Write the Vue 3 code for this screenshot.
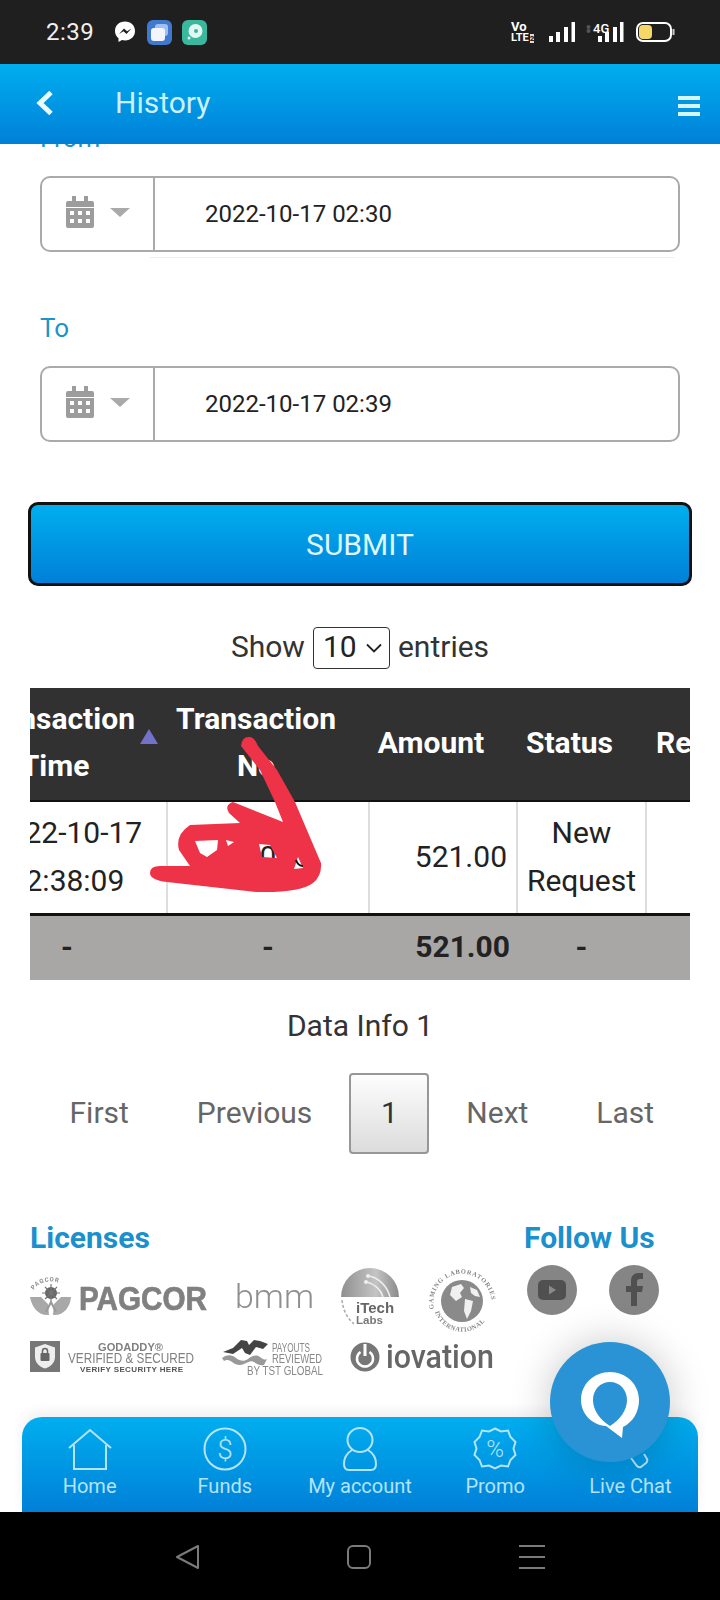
<script setup>
const navItems = ['Home', 'Funds', 'My account', 'Promo', 'Live Chat']
const dates = [
  { label: 'From', value: '2022-10-17 02:30', first: true },
  { label: 'To', value: '2022-10-17 02:39', first: false },
]
</script>

<template>
  <div class="page">
    <div class="statusbar">
      <div class="st-left">
        <span class="time">2:39</span>
        <svg class="st-msg" width="22" height="24" viewBox="0 0 22 24"><path d="M11 1.500C5 1.500 1 5.600 1 11c0 3 1.300 5.500 3.500 7.200V22l3.500-2c1 .3 2 .4 3 .4 6 0 10-4 10-9.400S17 1.500 11 1.500z" fill="#fff"/><path d="M5 14l5-5.500 3 2.700 4.500-2.700-5 5.500-3-2.700z" fill="#1f1f1f"/></svg>
        <svg class="st-app" width="25" height="25" viewBox="0 0 25 25"><rect width="25" height="25" rx="6" fill="#4079d0"/><rect x="8" y="4" width="13" height="12" rx="3" fill="#9fc0f0"/><rect x="4" y="8" width="14" height="13" rx="3" fill="#f2f6fc"/></svg>
        <svg class="st-app" width="25" height="25" viewBox="0 0 25 25"><rect width="25" height="25" rx="6" fill="#39b89d"/><circle cx="13.500" cy="11" r="7" fill="#e4f6f1"/><circle cx="14" cy="11" r="2" fill="#39b89d"/><circle cx="7" cy="18" r="1.500" fill="#e4f6f1"/></svg>
      </div>
      <div class="st-right">
        <div class="volte"><span class="vo">Vo</span><span class="lte">LTE<b>2</b></span></div>
        <svg width="26" height="20" viewBox="0 0 26 20"><rect x="0" y="14" width="4" height="6" fill="#fff"/><rect x="7" y="10" width="4" height="10" fill="#fff"/><rect x="15" y="5" width="4" height="15" fill="#fff"/><rect x="22.500" y="0" width="3.500" height="20" fill="#fff"/></svg>
        <svg class="sig4g" width="38" height="20" viewBox="0 0 38 20"><circle cx="2.500" cy="5" r="2" fill="#555"/><circle cx="2.500" cy="9" r="2" fill="#555"/><rect x="12" y="14" width="4" height="6" fill="#fff"/><rect x="19" y="10" width="4" height="10" fill="#fff"/><rect x="27" y="5" width="4" height="15" fill="#fff"/><rect x="34" y="0" width="3.500" height="20" fill="#fff"/><text x="7" y="11" font-size="13" font-family="Roboto, sans-serif" fill="#fff" font-weight="500">4G</text></svg>
        <svg width="39" height="20" viewBox="0 0 39 20"><rect x="1" y="1" width="34" height="18" rx="6" fill="none" stroke="#fff" stroke-width="2"/><rect x="3" y="3" width="13" height="14" rx="4" fill="#f5d867"/><rect x="36.500" y="7" width="2" height="6" fill="#ccc"/></svg>
      </div>
    </div>

    <header class="topbar">
      <svg class="back" width="18" height="26" viewBox="0 0 18 26"><path d="M15 2.500L4 13l11 10.500" fill="none" stroke="#eafaff" stroke-width="5"/></svg>
      <span class="title">History</span>
      <div class="burger"><i></i><i></i><i></i></div>
    </header>

    <main class="content">
      <div v-for="d in dates" :key="d.label" class="field" :class="{ 'field-first': d.first }">
        <label class="lbl">{{ d.label }}</label>
        <div class="inp">
          <div class="addon">
            <svg class="cal" width="28" height="32" viewBox="0 0 28 32"><path d="M0 7a2 2 0 0 1 2-2h4V0h4v5h8V0h4v5h4a2 2 0 0 1 2 2v4H0z" fill="#9c9c9c"/><path fill-rule="evenodd" d="M0 12h28v18a2 2 0 0 1-2 2H2a2 2 0 0 1-2-2zM4 15v4h4v-4zm8 0v4h4v-4zm8 0v4h4v-4zM4 23v4h4v-4zm8 0v4h4v-4zm8 0v4h4v-4z" fill="#9c9c9c"/></svg>
            <span class="caret"></span>
          </div>
          <span class="val">{{ d.value }}</span>
        </div>
        <div v-if="d.first" class="ghostline"></div>
      </div>

      <button class="submit">SUBMIT</button>

      <div class="show">
        <span class="showtxt">Show</span>
        <span class="selwrap">
          <select class="sel"><option>10</option></select>
          <svg class="chev" width="16" height="10" viewBox="0 0 16 10"><path d="M1 1.500l7 7 7-7" fill="none" stroke="#222" stroke-width="1.800"/></svg>
        </span>
        <span class="showtxt">entries</span>
      </div>

      <div class="tablewrap">
        <table class="tbl">
          <colgroup>
            <col class="c1"><col class="c2"><col class="c3"><col class="c4"><col class="c5">
          </colgroup>
          <thead>
            <tr>
              <th class="sorted">Transaction<br>Time<span class="sort"></span></th>
              <th>Transaction<br>No</th>
              <th>Amount</th>
              <th>Status</th>
              <th class="rem">Remark</th>
            </tr>
          </thead>
          <tbody>
            <tr>
              <td>2022-10-17<br>02:38:09</td>
              <td class="no">0</td>
              <td class="amt">521.00</td>
              <td>New<br>Request</td>
              <td></td>
            </tr>
          </tbody>
          <tfoot>
            <tr>
              <td>-</td>
              <td>-</td>
              <td class="amt">521.00</td>
              <td>-</td>
              <td></td>
            </tr>
          </tfoot>
        </table>
      </div>

      <div class="info">Data Info 1</div>

      <div class="pager">
        <a>First</a>
        <a>Previous</a>
        <a class="cur">1</a>
        <a>Next</a>
        <a>Last</a>
      </div>

      <div class="foot">
        <div class="lic">
          <h3>Licenses</h3>
          <div class="logorow r1">
            <svg width="177" height="42" viewBox="0 0 177 42">
              <defs><path id="pagArc" d="M4 14A18 13 0 0 1 38 14"/></defs>
              <text font-size="6" font-weight="700" font-family="Roboto, sans-serif" fill="#888" letter-spacing=".8"><textPath href="#pagArc">PAGCOR</textPath></text>
              <circle cx="21" cy="17" r="6" fill="#666"/>
              <path d="M21 8v18M12 17h18M15 11l12 12M27 11L15 23" stroke="#777" stroke-width="1.200"/>
              <path d="M0 21h11l7 7 1 11C9 40 2 32 0 21zM41 21H31l-7 7-1 11c10 1 17-7 18-18z" fill="#a8a8a8"/>
              <path d="M21 26l-5 10M21 26l5 10" stroke="#999" stroke-width="2"/>
              <text x="49" y="34" font-size="33" font-weight="700" font-family="Liberation Sans, sans-serif" fill="#808080" stroke="#808080" stroke-width=".7" textLength="128" lengthAdjust="spacingAndGlyphs">PAGCOR</text>
            </svg>
            <svg width="79" height="42" viewBox="0 0 79 42">
              <text x="0" y="32" font-size="33" font-weight="300" font-family="Roboto, sans-serif" fill="#8f8f8f" textLength="79" lengthAdjust="spacingAndGlyphs">bmm</text>
            </svg>
            <svg class="up" width="59" height="60" viewBox="0 0 59 60">
              <defs><linearGradient id="itg" x1="0" y1="0" x2="1" y2="0"><stop offset="0" stop-color="#8f8f8f"/><stop offset=".6" stop-color="#c4c4c4"/><stop offset="1" stop-color="#8a8a8a"/></linearGradient></defs>
              <path d="M0 29a29 29 0 0 1 58 0z" fill="url(#itg)"/>
              <path d="M28 8c10 2 18 10 21 21M26 14c8 2 14 8 16 15" fill="none" stroke="#eee" stroke-width="1.500"/>
              <circle cx="27" cy="8" r="2" fill="#eee"/><circle cx="25" cy="14" r="2" fill="#eee"/>
              <path d="M1 32c1 10 5 18 12 24" fill="none" stroke="#aaa" stroke-width="1.500" stroke-dasharray="3 2"/>
              <text x="15" y="45" font-size="15" font-weight="700" font-family="Liberation Sans, sans-serif" fill="#666">iTech</text>
              <text x="15" y="56" font-size="11.500" font-weight="700" font-family="Liberation Sans, sans-serif" fill="#777">Labs</text>
            </svg>
            <svg class="up2" width="68" height="68" viewBox="0 0 68 68">
              <defs>
                <path id="gliTop" d="M6 42A29 29 0 1 1 63 40"/>
                <path id="gliBot" d="M7 45A29 29 0 0 0 62 45"/>
              </defs>
              <circle cx="34" cy="34" r="21" fill="#8a8a8a"/>
              <path d="M24 20l9-3 3 4-4 5 2 4-6 4-6-6zM37 32l8 2-2 10-4 8-3-8zM42 20l7 3 3 7-5-1-4-3z" fill="#f0f0f0"/>
              <text font-size="6.500" font-weight="700" font-family="Liberation Serif, serif" fill="#888" letter-spacing=".7"><textPath href="#gliTop">GAMING LABORATORIES</textPath></text>
              <text font-size="6.500" font-weight="700" font-family="Liberation Serif, serif" fill="#888" letter-spacing=".5"><textPath href="#gliBot">INTERNATIONAL</textPath></text>
            </svg>
          </div>
          <div class="logorow r2">
            <svg width="164" height="34" viewBox="0 0 164 34">
              <rect y="1" width="30" height="31" fill="#777"/>
              <path d="M15 4l10 3.500v9c0 6-4 10-10 12-6-2-10-6-10-12v-9z" fill="#eee"/>
              <rect x="10.500" y="13" width="9" height="8" rx="1" fill="#666"/>
              <path d="M12.500 13v-2a2.500 2.500 0 0 1 5 0v2" fill="none" stroke="#666" stroke-width="1.500"/>
              <text x="68" y="11" font-size="11" font-weight="700" font-family="Liberation Sans, sans-serif" fill="#808080" textLength="65" lengthAdjust="spacingAndGlyphs">GODADDY®</text>
              <text x="38" y="23" font-size="14" font-family="Liberation Sans, sans-serif" fill="#808080" textLength="126" lengthAdjust="spacingAndGlyphs">VERIFIED &amp; SECURED</text>
              <text x="50" y="32" font-size="8" font-weight="700" font-family="Liberation Sans, sans-serif" fill="#555" textLength="103" lengthAdjust="spacing">VERIFY SECURITY HERE</text>
            </svg>
            <svg class="tst" width="101" height="38" viewBox="0 0 101 38">
              <path d="M1 14l10-4 8-8 6 1 2 4 5-5 6 1 8 3-5 5-7-2-6 8-5-2-3-5-9 6z" fill="#444"/>
              <path d="M0 20c6-4 10-3 14 0s8 4 12 1 8-5 12-2 5 3 7 2l-3 6c-4 1-7-1-10-3s-6 0-10 2-8 1-12-2-6-2-8-1z" fill="#999"/>
              <text x="50" y="14" font-size="12" font-family="Liberation Sans, sans-serif" fill="#888" textLength="38" lengthAdjust="spacingAndGlyphs">PAYOUTS</text>
              <text x="50" y="25" font-size="12" font-family="Liberation Sans, sans-serif" fill="#888" textLength="50" lengthAdjust="spacingAndGlyphs">REVIEWED</text>
              <text x="25" y="37" font-size="12" font-family="Liberation Sans, sans-serif" fill="#888" textLength="76" lengthAdjust="spacingAndGlyphs">BY TST GLOBAL</text>
            </svg>
            <svg class="iov" width="145" height="30" viewBox="0 0 145 30">
              <circle cx="15" cy="15" r="14.500" fill="#777"/>
              <path d="M10.500 10a8 8 0 1 0 9 0" fill="none" stroke="#fff" stroke-width="2.500"/>
              <rect x="13.500" y="2" width="3" height="12" fill="#fff"/>
              <text x="36" y="26" font-size="33" font-weight="500" font-family="Roboto, sans-serif" fill="#666" textLength="108" lengthAdjust="spacingAndGlyphs">iovation</text>
            </svg>
          </div>
        </div>
        <div class="follow">
          <h3>Follow Us</h3>
          <div class="socials">
            <svg width="50" height="50" viewBox="0 0 50 50"><circle cx="25" cy="25" r="25" fill="#858585"/><rect x="11" y="15" width="28" height="20" rx="5" fill="#505050"/><path d="M22 20.500l7 4.500-7 4.500z" fill="#8a8a8a"/></svg>
            <svg width="50" height="50" viewBox="0 0 50 50"><circle cx="25" cy="25" r="25" fill="#858585"/><path d="M22 41V27h-5v-6h5v-5c0-5 3-8 7.500-8H34v6h-3c-2 0-3 1-3 3v4h6l-1 6h-5v14z" fill="#505050"/></svg>
          </div>
        </div>
      </div>

      <nav class="bottomnav">
        <div v-for="(n, i) in navItems" :key="n" class="navitem">
          <svg v-if="i === 0" width="44" height="42" viewBox="0 0 44 42"><path d="M1 20L22 2l21 18M6 17v24h32V17" fill="none" stroke="#b5e3f8" stroke-width="2"/></svg>
          <svg v-else-if="i === 1" width="44" height="44" viewBox="0 0 44 44"><circle cx="22" cy="22" r="20.500" fill="none" stroke="#b5e3f8" stroke-width="2"/><text x="22" y="32" font-size="28" text-anchor="middle" font-family="Roboto, sans-serif" font-weight="300" fill="#b5e3f8">$</text></svg>
          <svg v-else-if="i === 2" width="34" height="44" viewBox="0 0 34 44"><ellipse cx="17" cy="13" rx="12.500" ry="12" fill="none" stroke="#b5e3f8" stroke-width="2"/><path d="M9 23C4 26 1 31 1 37c0 4 2 6 5 6h22c3 0 5-2 5-6 0-6-3-11-8-14" fill="none" stroke="#b5e3f8" stroke-width="2"/></svg>
          <svg v-else-if="i === 3" width="44" height="44" viewBox="0 0 44 44"><path d="M22 1.500l6 3 7-1 2.500 6.500 5 5-2 6.500 2 6.500-5 5-2.500 6.500-7-1-6 3-6-3-7 1-2.500-6.500-5-5 2-6.500-2-6.500 5-5L9 3.500l7 1z" fill="none" stroke="#b5e3f8" stroke-width="2"/><text x="22" y="30" font-size="24" text-anchor="middle" font-family="Roboto, sans-serif" font-weight="300" fill="#b5e3f8">%</text></svg>
          <svg v-else width="44" height="44" viewBox="0 0 44 44"><path d="M23 31l6 8q2 2 4 1l5-4q2-2 1-4l-3-5" fill="none" stroke="#b5e3f8" stroke-width="2"/></svg>
          <span>{{ n }}</span>
        </div>
      </nav>
    </main>

    <footer class="android">
      <svg width="24" height="24" viewBox="0 0 24 24"><path d="M23 1v22L2 12z" fill="none" stroke="#7a7a7a" stroke-width="2" stroke-linejoin="round"/></svg>
      <svg width="24" height="24" viewBox="0 0 24 24"><rect x="1" y="1" width="22" height="22" rx="5" fill="none" stroke="#7a7a7a" stroke-width="2"/></svg>
      <svg width="26" height="24" viewBox="0 0 26 24"><path d="M0 1h26M0 12h26M0 23h26" stroke="#7a7a7a" stroke-width="2"/></svg>
    </footer>

    <svg class="scribble" width="190" height="170" viewBox="141 730 190 170">
      <path fill-rule="evenodd" fill="#ee3349" d="M241 746Q242 736 250 737Q255 738 258 746L277 770L295 802L312 842L321 863Q322 876 313 883Q300 893 257 892L167 882Q150 880 150 873Q150 866 160 866L190 866L179 850Q175 835 190 825L240 823L229 813Q224 805 233 802L283 822L275 802L260 770zM195 841L218 840L217 850L207 857L200 853zM226 840L234 842L228 846zM259 844L270 845L277 858L262 857zM298 857L303 868L294 869z"/>
      <path d="M296 860Q298 866 303 866" fill="none" stroke="#111" stroke-width="2"/>
    </svg>

    <div class="fab">
      <svg width="58" height="66" viewBox="0 0 58 66"><path fill-rule="evenodd" d="M29 0c16 0 29 12 29 28 0 12-6 22-16 27l-1 11-16-12C11 53 0 42 0 28 0 12 13 0 29 0zm0 10c-10 0-17 8-17 18s7 20 17 26c10-6 17-16 17-26s-7-18-17-18z" fill="#fff"/></svg>
    </div>
  </div>
</template>

<style>
html, body { margin: 0; padding: 0; background: #fff; }
</style>

<style scoped>
.page {
  position: relative;
  width: 720px;
  height: 1600px;
  overflow: hidden;
  font-family: Roboto, "Liberation Sans", sans-serif;
  color: #222;
  background: #fff;
}
.statusbar {
  height: 64px;
  background: #1f1f1f;
  display: flex;
  align-items: center;
  justify-content: space-between;
  padding: 0 46px;
  box-sizing: border-box;
}
.st-left { display: flex; align-items: center; }
.time { font-size: 24px; color: #f0f0f0; width: 68px; letter-spacing: .5px; }
.st-msg { margin-right: 11px; }
.st-app { margin-right: 10px; }
.st-right { display: flex; align-items: center; gap: 12px; margin-right: -1px; }
.volte { display: flex; flex-direction: column; color: #fff; font-size: 11px; font-weight: 700; line-height: 11px; width: 26px; white-space: nowrap; }
.vo { font-size: 13px; }
.lte b { background: #ddd; color: #222; font-size: 8px; margin-left: 1px; }
.sig4g { margin-left: -1px; }
.topbar {
  height: 80px;
  background: linear-gradient(#00aeef, #0080d8);
  display: flex;
  align-items: center;
  position: relative;
  padding: 0 20px 0 36px;
}
.back { margin-right: 61px; margin-top: -3px; }
.title { font-size: 30px; color: #c9f1ff; flex: 1; margin-top: -3px; }
.burger { display: flex; flex-direction: column; gap: 4px; width: 22px; margin-top: 3px; }
.burger i { display: block; height: 4px; background: #d4f4ff; }
.content { height: 1368px; overflow: hidden; }
.field { padding: 0 40px; }
.lbl { display: block; height: 38px; line-height: 38px; font-size: 26px; color: #1f93c9; margin-bottom: 19px; }
.field-first .lbl { margin-top: -25px; }
.field:not(.field-first) { margin-top: 51px; }
.inp {
  height: 76px;
  box-sizing: border-box;
  border: 2px solid #aaa;
  border-radius: 10px;
  display: flex;
  align-items: center;
}
.addon {
  width: 113px;
  height: 100%;
  border-right: 2px solid #aaa;
  display: flex;
  align-items: center;
  padding-left: 24px;
  box-sizing: border-box;
  gap: 16px;
  flex: none;
}
.cal { margin-top: -4px; }
.caret {
  width: 0; height: 0;
  border-left: 10px solid transparent;
  border-right: 10px solid transparent;
  border-top: 9px solid #aaa;
  margin-top: -4px;
}
.val { font-size: 24px; margin-left: 50px; color: #222; }
.ghostline { height: 1px; background: #eee; margin: 5px 6px 0 110px; }
.submit {
  display: block;
  width: 664px;
  height: 84px;
  margin: 60px 0 0 28px;
  border: 3px solid #111;
  border-radius: 10px;
  background: linear-gradient(#00aeef, #0080d8);
  color: #dff6ff;
  font: 400 30px Roboto, sans-serif;
}
.show { display: flex; align-items: center; justify-content: center; gap: 8px; height: 42px; margin-top: 41px; font-size: 30px; color: #333; }
.showtxt { margin-top: -4px; }
.selwrap { position: relative; display: block; width: 77px; height: 42px; }
.sel {
  display: block;
  width: 77px;
  height: 42px;
  padding: 0 0 4px 9px;
  font: 30px Roboto, sans-serif;
  background: #fff;
  border: 1px solid #333;
  border-radius: 4px;
  color: #222;
  box-sizing: border-box;
  appearance: none;
}
.chev { position: absolute; right: 8px; top: 16px; pointer-events: none; }
.tablewrap { width: 660px; margin: 19px 0 0 30px; overflow: hidden; }
.tbl { border-collapse: collapse; table-layout: fixed; width: 829px; margin-left: -63px; font-size: 30px; }
.c1 { width: 200px; } .c2 { width: 202px; } .c3 { width: 148px; } .c4 { width: 129px; } .c5 { width: 150px; }
th {
  position: relative;
  height: 113px;
  padding: 0 24px 4px 0;
  background: #313131;
  color: #fff;
  font-weight: 700;
  font-size: 30px;
  line-height: 47px;
  border-bottom: 2px solid #111;
  box-sizing: border-box;
}
.rem { text-align: left; padding-left: 10px; white-space: nowrap; }
.sort {
  position: absolute;
  right: 9px;
  top: 41px;
  width: 0; height: 0;
  border-left: 9px solid transparent;
  border-right: 9px solid transparent;
  border-bottom: 15px solid #7272c9;
}
tbody td {
  height: 113px;
  padding: 0;
  text-align: center;
  line-height: 48px;
  border-left: 2px solid #ddd;
  border-bottom: 3px solid #111;
  box-sizing: border-box;
  color: #222;
}
tbody td:first-child { border-left: 0; }
.amt { text-align: right; padding-right: 9px; }
tfoot td {
  height: 66px;
  padding: 0 0 2px;
  background: #a9a6a6;
  text-align: center;
  font-weight: 700;
  color: #222;
  box-sizing: border-box;
}
tfoot .amt { padding-right: 7px; }
.info { text-align: center; font-size: 30px; line-height: 40px; margin-top: 26px; color: #333; }
.pager { display: flex; align-items: center; padding-left: 35.5px; margin-top: 27px; height: 81px; font-size: 30px; color: #666; }
.pager a { padding: 0 34px 2px; }
.pager .cur {
  width: 80px;
  height: 81px;
  padding: 0;
  margin: 0 3px;
  line-height: 76px;
  text-align: center;
  box-sizing: border-box;
  border: 2px solid #979797;
  border-radius: 4px;
  background: linear-gradient(#fdfdfd, #dcdcdc);
  color: #333;
}
.foot { display: flex; margin-top: 66px; padding-left: 30px; }
h3 { margin: 0; font-size: 30px; line-height: 36px; font-weight: 700; color: #1a90cc; }
.lic { width: 494px; flex: none; }
.logorow { display: flex; gap: 27.5px; filter: blur(.4px); }
.logorow svg { display: block; }
.r1 { height: 42px; margin-top: 20px; padding-bottom: 22px; align-items: flex-start; }
.r1 .up { margin-top: -8px; }
.r1 .up2 { margin-top: -9px; }
.r2 { height: 38px; margin-top: 0; }
.tst { margin-top: -2px; }
.iov { margin-top: 2px; }
.follow { flex: none; }
.socials { display: flex; gap: 32px; margin: 9px 0 0 3px; filter: blur(.4px); }
.bottomnav {
  width: 676px;
  height: 95px;
  margin: 39px 0 0 22px;
  border-radius: 20px 20px 0 0;
  background: linear-gradient(#00aeef, #0080d8);
  display: grid;
  grid-template-columns: repeat(5, 1fr);
  box-shadow: 0 -6px 12px rgba(0,0,0,.06);
}
.navitem { display: flex; flex-direction: column; align-items: center; padding-top: 10px; color: #b5e3f8; font-size: 20px; }
.navitem svg { height: 44px; display: block; }
.navitem span { margin-top: 2px; line-height: 26px; white-space: nowrap; }
.android {
  height: 88px;
  background: #000;
  display: flex;
  align-items: center;
  justify-content: center;
  gap: 148px;
  padding-top: 2px;
  box-sizing: border-box;
}
.scribble { position: absolute; left: 141px; top: 730px; pointer-events: none; }
.fab {
  position: absolute;
  left: 550px;
  top: 1342px;
  width: 120px;
  height: 120px;
  padding-top: 5px;
  box-sizing: border-box;
  border-radius: 50%;
  background: #2a93d5;
  box-shadow: 0 0 40px rgba(0,0,0,.22);
  display: flex;
  align-items: center;
  justify-content: center;
}
</style>
